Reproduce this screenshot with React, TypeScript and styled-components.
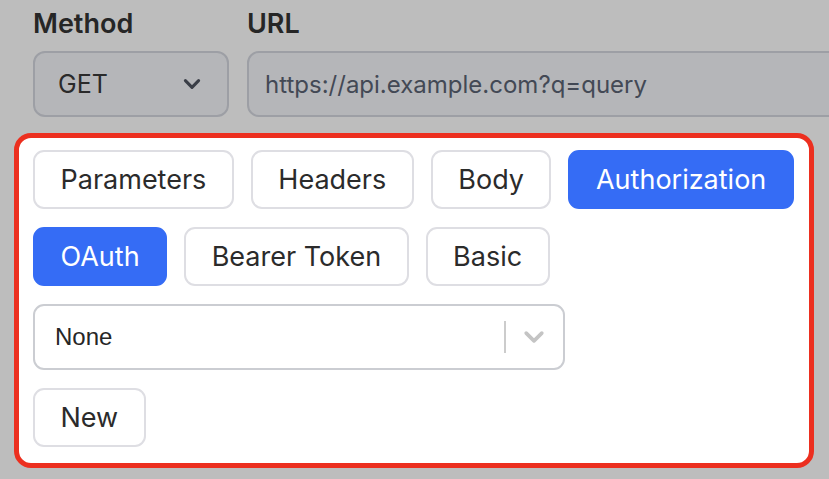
import styled, { createGlobalStyle } from "styled-components";

const GlobalStyle = createGlobalStyle`
  html, body {
    margin: 0;
    padding: 0;
    background: #bdbdbd;
    overflow: hidden;
  }
`;

const tabs = ["Parameters", "Headers", "Body", "Authorization"];
const authTypes = ["OAuth", "Bearer Token", "Basic"];

function Chevron({ color, size }: { color: string; size: number }) {
  return (
    <svg width={size} height={size} viewBox="0 0 20 20" fill="none">
      <path
        d="M4 7l6 6 6-6"
        stroke={color}
        strokeWidth={2.8}
        strokeLinecap="round"
        strokeLinejoin="round"
      />
    </svg>
  );
}

function App() {
  return (
    <Page>
      <GlobalStyle />
      <RequestLine>
        <Label>Method</Label>
        <Label>URL</Label>
        <MethodSelect>
          <span>GET</span>
          <Chevron color="#3a3e47" size={22} />
        </MethodSelect>
        <UrlField>https://api.example.com?q=query</UrlField>
      </RequestLine>

      <Card>
        <ButtonRow>
          {tabs.map((tab) => (
            <Pill key={tab} $active={tab === "Authorization"}>
              {tab}
            </Pill>
          ))}
        </ButtonRow>
        <ButtonRow>
          {authTypes.map((type) => (
            <Pill key={type} $active={type === "OAuth"}>
              {type}
            </Pill>
          ))}
        </ButtonRow>
        <Dropdown>
          <DropdownValue>None</DropdownValue>
          <Indicators>
            <Separator />
            <Chevron color="#c4c4c4" size={26} />
          </Indicators>
        </Dropdown>
        <div>
          <Pill>New</Pill>
        </div>
      </Card>
    </Page>
  );
}

const Page = styled.div`
  width: 829px;
  height: 479px;
  padding-top: 5px;
  box-sizing: border-box;
  font-family: Inter, "Noto Sans", sans-serif;
`;

const RequestLine = styled.div`
  display: grid;
  grid-template-columns: 196px 1fr;
  column-gap: 18px;
  row-gap: 8px;
  padding-left: 33px;
  margin-right: -40px;
`;

const Label = styled.div`
  font-size: 27px;
  font-weight: 600;
  line-height: 38px;
  color: #262626;
`;

const Field = styled.div`
  display: flex;
  align-items: center;
  height: 66px;
  box-sizing: border-box;
  border: 2px solid #9d9fa5;
  border-radius: 12px;
  background: #b5b6b9;
`;

const MethodSelect = styled(Field)`
  justify-content: space-between;
  padding: 0 24px 0 23px;
  font-size: 25px;
  color: #2a2a2a;
`;

const UrlField = styled(Field)`
  padding-left: 16px;
  font-size: 24px;
  color: #434955;
`;

const Card = styled.div`
  display: flex;
  flex-direction: column;
  gap: 18px;
  width: 800px;
  margin: 16px 0 0 14px;
  box-sizing: border-box;
  padding: 12px 14px 16px;
  border: 5px solid #ec2f1f;
  border-radius: 17px;
  background: #ffffff;
`;

const ButtonRow = styled.div`
  display: flex;
  gap: 17px;
`;

const Pill = styled.button<{ $active?: boolean }>`
  height: 59px;
  padding: 0 25.5px;
  box-sizing: border-box;
  border: 2px solid ${(p) => (p.$active ? "#356cf5" : "#dedee3")};
  border-radius: 11px;
  background: ${(p) => (p.$active ? "#356cf5" : "#ffffff")};
  color: ${(p) => (p.$active ? "#ffffff" : "#2b2b2b")};
  font-family: Inter, "Noto Sans", sans-serif;
  font-size: 27px;
  font-weight: 400;
`;

const Dropdown = styled.div`
  display: flex;
  align-items: center;
  width: 532px;
  height: 66px;
  box-sizing: border-box;
  padding: 0 16px 0 20px;
  border: 2px solid #cbcdd2;
  border-radius: 11px;
`;

const DropdownValue = styled.span`
  flex: 1;
  font-family: "Liberation Sans", Arial, sans-serif;
  font-size: 24px;
  color: #262626;
`;

const Indicators = styled.div`
  display: flex;
  align-items: center;
  gap: 15px;
`;

const Separator = styled.span`
  width: 2px;
  height: 32px;
  background: #cccccc;
`;

export default App;
